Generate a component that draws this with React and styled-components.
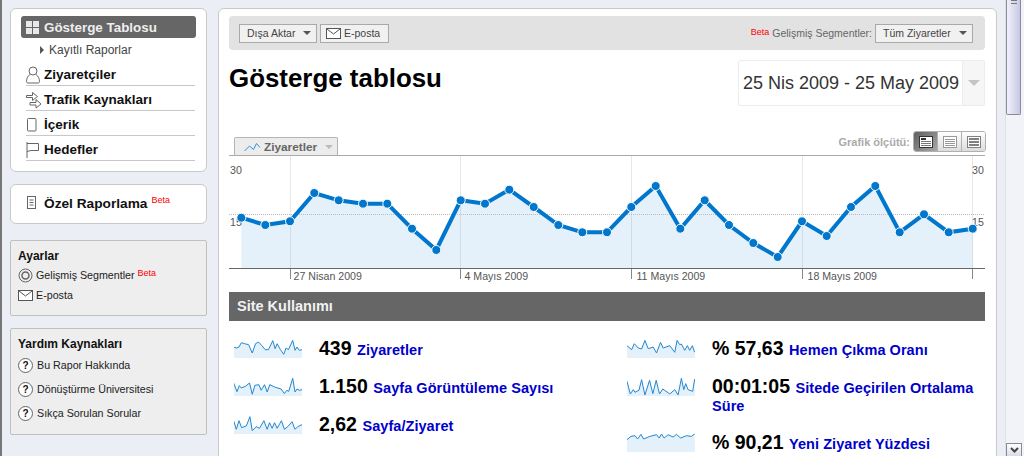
import styled, { createGlobalStyle } from "styled-components";

const GlobalStyle = createGlobalStyle`
  html, body {
    margin: 0;
    height: 456px;
    overflow: hidden;
    background: #ebeef4;
    font-family: "Liberation Sans", Arial, sans-serif;
  }
`;

const chartPoints = [
  [242.3, 217.7], [266.3, 225], [291, 221.3], [315.3, 193], [339.7, 200.3], [364, 203.7],
  [388.3, 203.7], [413, 228.7], [437.3, 250], [461.7, 200.3], [486, 203.7], [510.3, 189.7],
  [534.7, 207], [559.3, 225], [583.3, 232.3], [608, 232.3], [632.3, 207], [656.7, 186],
  [681.3, 228.7], [705.7, 200.3], [730, 225], [754.3, 243], [778.7, 257], [803, 221.3],
  [827.7, 236], [852, 207], [876.3, 186], [900.7, 232.3], [925, 214.3], [949.7, 232.3],
  [973.7, 228.7],
];
const weekTicks = [
  { x: 291.5, dx: 3, label: "27 Nisan 2009" },
  { x: 461.5, dx: 4, label: "4 Mayıs 2009" },
  { x: 632.5, dx: 5, label: "11 Mayıs 2009" },
  { x: 803.5, dx: 5, label: "18 Mayıs 2009" },
  { x: 973.5, dx: 0, label: "" },
];

// sparkline points are read off the reference at 3x, dy moves them back to the first row
const leftStats = [
  {
    value: "439",
    label: "Ziyaretler",
    dy: 0,
    spark: "12,42 20,45 28,42 35,29 45,32 57,35 68,60 78,32 87,27 97,38 107,50 117,50 130,23 137,47 143,32 153,50 163,64 170,45 177,50 190,22 197,52 203,42 210,52 218,50",
  },
  {
    value: "1.150",
    label: "Sayfa Görüntüleme Sayısı",
    dy: 114,
    spark: "12,150 22,176 29,158 35,165 47,160 60,150 68,184 76,157 88,155 95,172 105,155 113,177 121,155 135,162 155,168 165,182 172,172 178,175 190,136 197,177 203,168 210,172 218,170",
  },
  {
    value: "2,62",
    label: "Sayfa/Ziyaret",
    dy: 227,
    spark: "12,262 20,288 28,262 36,283 50,278 61,250 68,292 80,280 90,285 103,262 113,288 120,268 128,285 135,268 143,285 156,262 165,288 175,280 188,265 197,288 205,280 218,274",
  },
];
const rightStats = [
  {
    value: "% 57,63",
    label: "Hemen Çıkma Oranı",
    dy: 0,
    spark: "16,38 30,50 38,32 50,45 60,48 70,22 80,47 95,42 105,60 117,28 125,45 145,38 160,58 167,22 175,35 180,33 190,52 198,38 205,52 213,38 220,58",
  },
  {
    value: "00:01:05",
    label: "Sitede Geçirilen Ortalama Süre",
    dy: 114,
    tall: true,
    spark: "16,145 26,183 35,170 40,178 52,172 60,140 70,186 84,142 94,182 104,142 114,183 124,168 145,183 160,170 170,186 180,136 187,170 193,152 200,170 214,175 220,138",
  },
  {
    value: "% 90,21",
    label: "Yeni Ziyaret Yüzdesi",
    dy: 282,
    spark: "16,320 28,310 40,308 48,318 58,304 66,318 85,310 105,305 113,315 120,303 128,315 140,305 155,312 165,304 178,315 195,308 210,310 220,303",
  },
];

const Page = styled.div`
  display: flex;
  height: 456px;
  overflow: hidden;
  border-left: 2px solid #777;
  box-sizing: border-box;
`;

const Sidebar = styled.aside`
  width: 197px;
  margin: 8px 0 0 8px;
  display: flex;
  flex-direction: column;
  flex: none;
`;

const NavPanel = styled.nav`
  box-sizing: border-box;
  height: 164px;
  padding: 7px 10px 0;
  background: #fff;
  border: 1px solid #c9c9c9;
  border-radius: 6px;
`;

const ActiveItem = styled.a`
  display: flex;
  align-items: center;
  gap: 5px;
  height: 22px;
  padding-left: 5px;
  background: #666;
  border-radius: 3px;
  color: #eee;
  font-size: 13.4px;
  font-weight: bold;
`;

const SubItem = styled.a`
  display: flex;
  align-items: center;
  gap: 3px;
  box-sizing: border-box;
  height: 23px;
  padding: 1px 0 0 19px;
  color: #444;
  font-size: 12px;
  &::before {
    content: "";
    border-left: 4px solid #555;
    border-top: 4px solid transparent;
    border-bottom: 4px solid transparent;
    margin-right: 2px;
  }
`;

const NavItem = styled.a`
  display: flex;
  align-items: center;
  gap: 4px;
  box-sizing: border-box;
  height: 25px;
  margin: 0 1px 0 5px;
  padding-top: 3px;
  border-bottom: 1px solid #c8c8c8;
  color: #111;
  font-size: 13.5px;
  font-weight: bold;
`;

const NavIcon = styled.svg`
  width: 14px;
  height: 18px;
  flex: none;
  fill: none;
  stroke: #666;
  stroke-width: 1;
`;

const ArrowsIcon = styled(NavIcon)`
  width: 16px;
  margin-right: -2px;
`;

const CustomPanel = styled.div`
  box-sizing: border-box;
  height: 40px;
  margin-top: 12px;
  padding: 0 0 2px 15px;
  display: flex;
  align-items: center;
  gap: 4px;
  background: #fff;
  border: 1px solid #c9c9c9;
  border-radius: 6px;
  color: #111;
  font-size: 13.7px;
  font-weight: bold;
`;

const Beta = styled.sup`
  color: #f00;
  font-size: 9px;
  font-weight: normal;
  line-height: 1;
  align-self: flex-start;
  position: relative;
  top: ${(p) => p.$top || 0}px;
`;

const InfoPanel = styled.section`
  box-sizing: border-box;
  height: ${(p) => p.$height}px;
  margin-top: ${(p) => p.$top}px;
  padding: 8px 7px 0;
  background: #eee;
  border: 1px solid #c0c0c0;
  border-radius: 2px;
`;

const InfoTitle = styled.h3`
  margin: 0 0 1px;
  height: 15px;
  color: #111;
  font-size: 12px;
  font-weight: bold;
  line-height: 15px;
`;

const InfoLink = styled.a`
  display: flex;
  align-items: center;
  gap: 3px;
  height: ${(p) => p.$height}px;
  color: #222;
  font-size: 10.7px;
  white-space: nowrap;
`;

const HelpIcon = styled.span`
  box-sizing: border-box;
  width: 15px;
  height: 15px;
  margin-right: 1px;
  flex: none;
  display: flex;
  align-items: center;
  justify-content: center;
  background: #fff;
  border: 1px solid #666;
  border-radius: 50%;
  color: #111;
  font-size: 10px;
  font-weight: bold;
`;

const Main = styled.main`
  box-sizing: border-box;
  width: 779px;
  height: 520px;
  margin: 8px 0 0 11px;
  padding: 7px 11px 0 10px;
  flex: none;
  background: #fff;
  border: 1px solid #c9c9c9;
  border-radius: 6px;
`;

const Toolbar = styled.div`
  display: flex;
  align-items: center;
  justify-content: space-between;
  height: 34px;
  padding: 0 12px 0 10px;
  background: #e2e2e2;
  border-radius: 4px;
`;

const ToolGroup = styled.div`
  display: flex;
  align-items: center;
  gap: 3px;
`;

const ToolButton = styled.button`
  box-sizing: border-box;
  height: 19px;
  width: ${(p) => p.$width}px;
  padding: 0 0 0 ${(p) => p.$pad}px;
  display: flex;
  align-items: center;
  gap: 3px;
  background: #f1f1f1;
  border: 1px solid #a9a9a9;
  color: #444;
  font: 10.5px "Liberation Sans", Arial, sans-serif;
  white-space: nowrap;
`;

const Caret = styled.span`
  width: 0;
  height: 0;
  margin-left: ${(p) => p.$left || 0}px;
  border-top: ${(p) => p.$height || 4}px solid ${(p) => p.$color || "#555"};
  border-left: ${(p) => p.$size || 4}px solid transparent;
  border-right: ${(p) => p.$size || 4}px solid transparent;
`;

const SegmentLabel = styled.span`
  color: #666;
  font-size: 10.5px;
  white-space: nowrap;
`;

const HeadingRow = styled.div`
  display: flex;
  justify-content: space-between;
  margin-top: 10px;
  height: 46px;
`;

const Title = styled.h1`
  margin: 3px 0 0;
  color: #000;
  font-size: 25.9px;
  font-weight: bold;
  line-height: 30px;
`;

const DateBox = styled.div`
  box-sizing: border-box;
  width: 247px;
  height: 46px;
  display: flex;
  align-items: center;
  justify-content: space-between;
  padding-left: 4px;
  border: 1px solid #ececec;
  border-radius: 2px;
  color: #333;
  font-size: 18px;
  white-space: nowrap;
`;

const DateArrow = styled.div`
  width: 21px;
  height: 100%;
  display: flex;
  align-items: center;
  justify-content: center;
  background: #f6f6f6;
  border-left: 1px solid #ececec;
`;

const ChartHead = styled.div`
  display: flex;
  justify-content: space-between;
  align-items: flex-end;
  height: 49px;
`;

const ChartTab = styled.div`
  box-sizing: border-box;
  width: 104px;
  height: 19px;
  margin: 0 0 -1px 5px;
  padding-left: 9px;
  display: flex;
  align-items: center;
  gap: 3px;
  background: #ececec;
  border: 1px solid #b4b4b4;
  border-bottom: 0;
  border-radius: 2px 2px 0 0;
  color: #666;
  font-size: 11.8px;
  font-weight: bold;
`;

const ChartSize = styled.div`
  display: flex;
  align-items: center;
  gap: 3px;
  margin: 0 -1px 3px 0;
  color: #aaa;
  font-size: 11px;
  font-weight: bold;
`;

const SizeGroup = styled.div`
  box-sizing: border-box;
  display: flex;
  width: 73px;
  height: 21px;
  border: 1px solid #b0b0b0;
  border-radius: 3px;
  overflow: hidden;
`;

const SizeButton = styled.span`
  flex: 1;
  display: flex;
  align-items: center;
  justify-content: center;
  background: ${(p) => (p.$active ? "linear-gradient(135deg, #5f5f5f, #a8a8a8)" : "linear-gradient(#fff, #dcdcdc)")};
  & + & {
    border-left: 1px solid #b0b0b0;
  }
`;

const ChartSvg = styled.svg`
  display: block;
  width: 756px;
  height: 137px;
  text {
    font-family: "Liberation Sans", Arial, sans-serif;
    font-size: 10.6px;
    fill: #555;
  }
`;

const SectionHead = styled.h2`
  margin: 0;
  height: 29px;
  padding-left: 8px;
  background: #666;
  color: #f2f2f2;
  font-size: 14.5px;
  font-weight: bold;
  line-height: 28px;
`;

const StatsGrid = styled.div`
  display: grid;
  grid-template-columns: 393px 1fr;
  padding: 17px 0 0 5px;
`;

const StatColumn = styled.div`
  display: flex;
  flex-direction: column;
`;

const StatRow = styled.div`
  display: flex;
  min-height: ${(p) => (p.$tall ? 56 : 38)}px;
`;

const SparkSvg = styled.svg`
  width: 68px;
  height: 20px;
  margin-right: 17px;
  flex: none;
`;

const StatText = styled.p`
  margin: 1px 0 0;
  width: ${(p) => p.$width}px;
  line-height: 18px;
`;

const StatValue = styled.span`
  margin-right: 5.5px;
  color: #000;
  font-size: 19.5px;
  font-weight: bold;
  line-height: 18px;
`;

const StatLabel = styled.a`
  color: #0000cc;
  font-size: 14.5px;
  letter-spacing: 0.05px;
  font-weight: bold;
`;

const Scrollbar = styled.div`
  width: 18px;
  margin-left: 8px;
  flex: none;
  display: flex;
  flex-direction: column;
  background: #f2f3f8;
  border-left: 1px solid #dfe1ea;
`;

const Thumb = styled.div`
  box-sizing: border-box;
  width: 15px;
  height: 115px;
  background: linear-gradient(90deg, #f0f0fa, #c6c9e4);
  border: 1px solid #8a8a96;
  border-top: 0;
  border-radius: 0 0 2px 2px;
  &::before {
    content: "";
    display: block;
    width: 6px;
    height: 2px;
    margin: 0 auto;
    border-top: 1px solid #777;
    border-bottom: 1px solid #777;
  }
`;

const ScrollDown = styled.div`
  box-sizing: border-box;
  width: 16px;
  height: 13px;
  margin-top: auto;
  display: flex;
  align-items: center;
  justify-content: center;
  background: linear-gradient(#fff, #d9dbe8);
  border: 1px solid #8a8a96;
  border-bottom: 0;
`;

const Sparkline = ({ points, dy, left }) => {
  const moved = points
    .split(" ")
    .map((pair) => {
      const [x, y] = pair.split(",").map(Number);
      return `${x},${y - dy}`;
    })
    .join(" ");
  const right = left + 205;
  return (
    <SparkSvg viewBox={`${left} 15 205 60`}>
      <polygon points={`${left},75 ${moved} ${right},75`} fill="#e4f1fa" />
      <polyline points={moved} fill="none" stroke="#1f86d0" strokeWidth="3" />
    </SparkSvg>
  );
};

const MailIcon = () => (
  <svg width="15" height="11" viewBox="0 0 15 11" fill="none" stroke="#555">
    <rect x="0.5" y="0.5" width="14" height="10" fill="#fff" />
    <path d="M1 1l6.5 5L14 1" />
  </svg>
);

const App = () => (
  <>
    <GlobalStyle />
    <Page>
      <Sidebar>
        <NavPanel>
          <ActiveItem>
            <svg width="13" height="13" viewBox="0 0 13 13" fill="#e8e8e8">
              <rect width="6" height="6" />
              <rect x="7" width="6" height="6" />
              <rect y="7" width="6" height="6" />
              <rect x="7" y="7" width="6" height="6" />
            </svg>
            Gösterge Tablosu
          </ActiveItem>
          <SubItem>Kayıtlı Raporlar</SubItem>
          <NavItem>
            <NavIcon viewBox="0 0 14 18">
              <circle cx="7" cy="5" r="4" />
              <path d="M4 8.5C1.5 10 .5 13 .5 15.5c0 1 .5 1.5 1.5 1.5h10c1 0 1.5-.5 1.5-1.5 0-2.5-1-5.5-3.5-7" />
            </NavIcon>
            Ziyaretçiler
          </NavItem>
          <NavItem>
            <ArrowsIcon viewBox="0 0 16 18">
              <path d="M.5 4.5h6v-3l5 4-5 4v-3h-6z" fill="#fff" />
              <path d="M4 11.5h6v-3l5 4.5-5 4v-3H4z" fill="#fff" />
            </ArrowsIcon>
            Trafik Kaynakları
          </NavItem>
          <NavItem>
            <NavIcon viewBox="0 0 14 18">
              <rect x="1.5" y="2.5" width="8.5" height="12.5" rx="1" />
            </NavIcon>
            İçerik
          </NavItem>
          <NavItem>
            <NavIcon viewBox="0 0 14 18">
              <path d="M1 1v16M1 2.5h11.5v7H5l-4 1" />
            </NavIcon>
            Hedefler
          </NavItem>
        </NavPanel>

        <CustomPanel>
          <NavIcon viewBox="0 0 14 18">
            <rect x="1.5" y="2.5" width="8" height="12" />
            <path d="M3.5 6h4M3.5 8.5h4M3.5 11h4" />
          </NavIcon>
          Özel Raporlama
          <Beta $top={11}>Beta</Beta>
        </CustomPanel>

        <InfoPanel $height={76} $top={16}>
          <InfoTitle>Ayarlar</InfoTitle>
          <InfoLink $height={20}>
            <svg width="15" height="15" viewBox="0 0 15 15" fill="none" stroke="#666">
              <circle cx="7.5" cy="7.5" r="6.5" />
              <circle cx="7.5" cy="7.5" r="3.5" strokeWidth="1.5" />
            </svg>
            Gelişmiş Segmentler
            <Beta $top={4}>Beta</Beta>
          </InfoLink>
          <InfoLink $height={20}>
            <MailIcon />
            E-posta
          </InfoLink>
        </InfoPanel>

        <InfoPanel $height={107} $top={12}>
          <InfoTitle>Yardım Kaynakları</InfoTitle>
          <InfoLink $height={24}>
            <HelpIcon>?</HelpIcon>Bu Rapor Hakkında
          </InfoLink>
          <InfoLink $height={24}>
            <HelpIcon>?</HelpIcon>Dönüştürme Üniversitesi
          </InfoLink>
          <InfoLink $height={24}>
            <HelpIcon>?</HelpIcon>Sıkça Sorulan Sorular
          </InfoLink>
        </InfoPanel>
      </Sidebar>

      <Main>
        <Toolbar>
          <ToolGroup>
            <ToolButton $width={78} $pad={7}>
              Dışa Aktar
              <Caret $left={5} />
            </ToolButton>
            <ToolButton $width={69} $pad={5}>
              <MailIcon />
              E-posta
            </ToolButton>
          </ToolGroup>
          <ToolGroup>
            <Beta $top={4}>Beta</Beta>
            <SegmentLabel>Gelişmiş Segmentler:</SegmentLabel>
            <ToolButton $width={98} $pad={7}>
              Tüm Ziyaretler
              <Caret $left={5} />
            </ToolButton>
          </ToolGroup>
        </Toolbar>

        <HeadingRow>
          <Title>Gösterge tablosu</Title>
          <DateBox>
            25 Nis 2009 - 25 May 2009
            <DateArrow>
              <Caret $size={6} $height={6} $color="#c4c4c4" />
            </DateArrow>
          </DateBox>
        </HeadingRow>

        <ChartHead>
          <ChartTab>
            <svg width="17" height="10" viewBox="0 0 17 10" fill="none" stroke="#3a8fd8">
              <path d="M.5 9l5-5 4 3.5 3-6 3.5 4" />
            </svg>
            Ziyaretler
            <Caret $left={5} $color="#bbb" />
          </ChartTab>
          <ChartSize>
            Grafik ölçütü:
            <SizeGroup>
              <SizeButton $active>
                <svg width="14" height="12" viewBox="0 0 14 12" fill="#fff" stroke="#777">
                  <rect x=".5" y=".5" width="13" height="11" stroke="#333" />
                  <path d="M2 3h5" stroke="#333" strokeWidth="2" />
                  <path d="M2 5.5h10M2 7.5h10M2 9.5h10" />
                </svg>
              </SizeButton>
              <SizeButton>
                <svg width="14" height="12" viewBox="0 0 14 12" fill="#fff" stroke="#999">
                  <rect x=".5" y=".5" width="13" height="11" />
                  <path d="M2 3.5h10M2 5.5h10M2 7.5h10M2 9.5h10" />
                </svg>
              </SizeButton>
              <SizeButton>
                <svg width="14" height="12" viewBox="0 0 14 12" fill="#fff" stroke="#808080">
                  <rect x=".5" y=".5" width="13" height="11" />
                  <path d="M2 3h10M2 6h10M2 9h10" strokeWidth="2" />
                </svg>
              </SizeButton>
            </SizeGroup>
          </ChartSize>
        </ChartHead>

        <ChartSvg viewBox="230 155 756 137">
          <polygon
            points={`242.3,268 ${chartPoints.map((p) => p.join(",")).join(" ")} 973.7,268`}
            fill="#e4f1fa"
          />
          {weekTicks.map((tick) => (
            <g key={tick.x}>
              <line x1={tick.x} x2={tick.x} y1="155" y2="268" stroke="#888" strokeOpacity="0.2" />
              <line x1={tick.x} x2={tick.x} y1="268" y2="279" stroke="#888" />
              {tick.label && <text x={tick.x + tick.dx} y="280">{tick.label}</text>}
            </g>
          ))}
          <line x1="230" x2="986" y1="155.5" y2="155.5" stroke="#aaa" />
          <line x1="230" x2="986" y1="214.5" y2="214.5" stroke="#bbb" strokeDasharray="1 1" />
          <line x1="230" x2="986" y1="268.5" y2="268.5" stroke="#666" />
          <text x="231" y="174">30</text>
          <text x="231" y="226">15</text>
          <text x="973" y="174">30</text>
          <text x="973" y="226">15</text>
          <polyline
            points={chartPoints.map((p) => p.join(",")).join(" ")}
            fill="none"
            stroke="#0077cc"
            strokeWidth="4"
          />
          {chartPoints.map(([x, y]) => (
            <circle key={x} cx={x} cy={y} r="4.5" fill="#0077cc" stroke="#fff" strokeWidth="1" />
          ))}
        </ChartSvg>

        <SectionHead>Site Kullanımı</SectionHead>

        <StatsGrid>
          <StatColumn>
            {leftStats.map((stat) => (
              <StatRow key={stat.label}>
                <Sparkline points={stat.spark} dy={stat.dy} left={13} />
                <StatText $width={290}>
                  <StatValue>{stat.value}</StatValue>
                  <StatLabel>{stat.label}</StatLabel>
                </StatText>
              </StatRow>
            ))}
          </StatColumn>
          <StatColumn>
            {rightStats.map((stat) => (
              <StatRow key={stat.label} $tall={stat.tall}>
                <Sparkline points={stat.spark} dy={stat.dy} left={16} />
                <StatText $width={275}>
                  <StatValue>{stat.value}</StatValue>
                  <StatLabel>{stat.label}</StatLabel>
                </StatText>
              </StatRow>
            ))}
          </StatColumn>
        </StatsGrid>
      </Main>

      <Scrollbar>
        <Thumb />
        <ScrollDown>
          <svg width="9" height="6" viewBox="0 0 9 6" fill="none" stroke="#444" strokeWidth="2">
            <path d="M1 1l3.5 3.5L8 1" />
          </svg>
        </ScrollDown>
      </Scrollbar>
    </Page>
  </>
);

export default App;
